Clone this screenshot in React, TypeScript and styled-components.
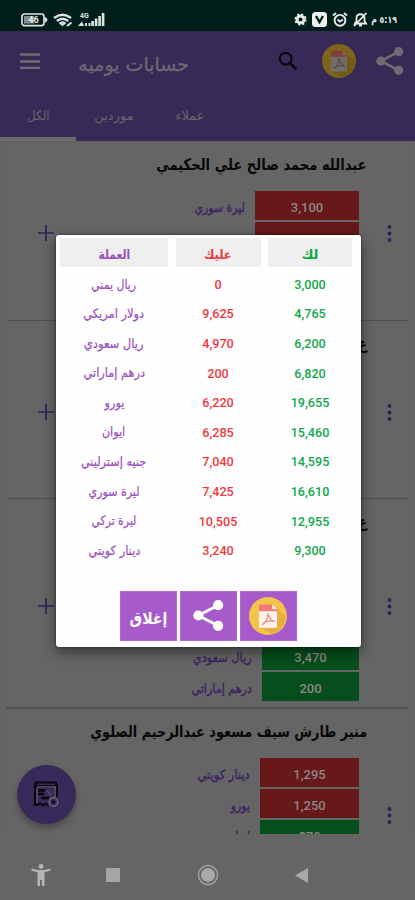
import React from "react";
import styled, { createGlobalStyle } from "styled-components";

const Global = createGlobalStyle`
  * { box-sizing: border-box; }
  body { margin: 0; background: #646464; font-family: Roboto, "DejaVu Sans", sans-serif; }
`;

const Phone = styled.div`
  position: relative;
  width: 415px;
  height: 900px;
  overflow: hidden;
  display: flex;
  flex-direction: column;
  background: #646464;
`;

/* Condensed Arabic lettering; $stroke thickens the regular weight a little */
const Arabic = styled.span<{ $size: number; $sx?: number; $origin?: string; $bold?: boolean; $stroke?: number }>`
  display: inline-block;
  direction: rtl;
  white-space: nowrap;
  font-family: "DejaVu Sans", sans-serif;
  font-size: ${(p) => p.$size}px;
  font-weight: ${(p) => (p.$bold ? 700 : 400)};
  line-height: 1.2;
  -webkit-text-stroke: ${(p) => p.$stroke ?? 0}px currentColor;
  transform: scaleX(${(p) => p.$sx ?? 1});
  transform-origin: ${(p) => p.$origin ?? "center"} center;
`;

const StatusBar = styled.div`
  flex: none;
  height: 31px;
  padding: 8px 18px 0 21px;
  display: flex;
  justify-content: space-between;
  align-items: center;
  background: #001f19;
  color: #e4e8e6;
`;
const StatusGroup = styled.div<{ $gap: number }>`
  display: flex;
  align-items: center;
  gap: ${(p) => p.$gap}px;
`;
const Clock = styled.span`
  font: 700 10px/14px "DejaVu Sans", sans-serif;
  direction: rtl;
  white-space: nowrap;
  transform: scaleX(0.78);
  transform-origin: right center;
  width: 24px;
  display: flex;
  justify-content: flex-start;
`;

const Header = styled.header`
  flex: none;
  height: 110px;
  display: flex;
  flex-direction: column;
  background: #372a56;
`;
const Toolbar = styled.div`
  height: 63px;
  display: flex;
  align-items: center;
  padding: 0 11px 3px 20px;
`;
const Title = styled.div`
  width: 112px;
  margin: 6px 0 0 37px;
  display: flex;
  justify-content: flex-end;
  color: #6c6a70;
`;
const Actions = styled.div`
  margin-left: auto;
  display: flex;
  align-items: center;
`;
const SearchSlot = styled.div`
  display: flex;
  margin-right: 24px;
`;
const ShareSlot = styled.div`
  display: flex;
  margin-left: 20px;
`;
const Tabs = styled.nav`
  flex: 1;
  display: flex;
`;
const Tab = styled.div<{ $active?: boolean }>`
  width: 76px;
  display: flex;
  justify-content: center;
  padding-top: 14px;
  color: #68656d;
  border-bottom: 4px solid ${(p) => (p.$active ? "#6b6b6b" : "transparent")};
`;

const List = styled.main`
  flex: none;
  height: 693px;
  overflow: hidden;
  padding: 2px 6px 0;
`;
const Card = styled.section<{ $h: number; $gap: number; $edge: number }>`
  height: ${(p) => p.$h}px;
  margin-bottom: ${(p) => p.$gap}px;
  display: grid;
  grid-template-columns: 48px 1fr 50px;
  border-bottom: ${(p) => p.$edge}px solid #505050;
  border-radius: 3px;
  background: #656565;
`;
const Side = styled.div<{ $top: number; $right?: boolean }>`
  padding-top: ${(p) => p.$top}px;
  display: flex;
  justify-content: ${(p) => (p.$right ? "flex-start" : "flex-end")};
  align-items: flex-start;
  padding-left: ${(p) => (p.$right ? 28 : 0)}px;
`;
const Body = styled.div`
  min-width: 0;
  display: flex;
  flex-direction: column;
  align-items: flex-end;
`;
const Name = styled.h2`
  margin: 0 -8px 0 0;
  height: 48px;
  padding-top: 12px;
  color: #090909;
  display: flex;
  justify-content: flex-end;
`;
const Entry = styled.div`
  display: flex;
  align-items: center;
  gap: 10px;
  height: 29px;
  margin-bottom: 2px;
  color: #3d2163;
`;
const EntryLabel = styled.div`
  display: flex;
  padding-top: 3px;
`;
const Amount = styled.div<{ $red?: boolean; $w: number }>`
  width: ${(p) => p.$w}px;
  height: 29px;
  display: flex;
  align-items: center;
  justify-content: center;
  padding-top: 3px;
  background: ${(p) => (p.$red ? "#671819" : "#064e1b")};
  color: #8d8787;
  font-size: 13px;
  font-weight: 500;
`;

const Fab = styled.div`
  position: absolute;
  left: 17px;
  top: 765px;
  width: 59px;
  height: 59px;
  border-radius: 50%;
  display: flex;
  align-items: center;
  justify-content: center;
  background: #372a5b;
  box-shadow: 0 4px 6px rgba(0, 0, 0, 0.3);
`;

const NavBar = styled.footer`
  flex: 1;
  display: flex;
  align-items: flex-start;
  padding: 26px 0 0 31px;
  background: #656565;
`;
const NavItem = styled.div<{ $w: number }>`
  width: ${(p) => p.$w}px;
  height: 30px;
  display: flex;
  align-items: center;
`;

const Dialog = styled.div`
  position: absolute;
  left: 55.5px;
  top: 235px;
  width: 305px;
  height: 412px;
  padding: 3px 8px 0 4.5px;
  display: flex;
  flex-direction: column;
  background: #fefefe;
  border-radius: 3px;
  box-shadow: 0 5px 14px rgba(0, 0, 0, 0.45), 0 0 3px rgba(0, 0, 0, 0.5);
`;
const TableRow = styled.div`
  display: grid;
  grid-template-columns: 108px 85px 84px;
  column-gap: 7.5px;
  height: 29.6px;
  align-items: center;
`;
const HeadRow = styled(TableRow)`
  height: 29px;
  margin-bottom: 2px;
`;
const tones = { purple: "#9a4fbd", red: "#ee383d", green: "#11a84c" };
const Cell = styled.div<{ $tone: keyof typeof tones; $head?: boolean }>`
  display: flex;
  align-items: center;
  justify-content: center;
  height: ${(p) => (p.$head ? 29 : 26)}px;
  padding-top: ${(p) => (p.$head ? 4 : 1)}px;
  background: ${(p) => (p.$head ? "#efefef" : "transparent")};
  color: ${(p) => tones[p.$tone]};
  font-size: 12.6px;
  font-weight: 500;
`;
const Buttons = styled.div`
  display: flex;
  gap: 3px;
  margin: 26px 0 0 59.5px;
`;
const DialogButton = styled.button`
  width: 57px;
  height: 50px;
  padding: 0;
  border: 1px solid #b06bd0;
  display: flex;
  align-items: center;
  justify-content: center;
  background: #a75bcb;
  color: #fff;
`;
const CloseLabel = styled.div`
  padding-top: 5px;
  display: flex;
`;

const Share = ({ size, color }: { size: number; color: string }) => (
  <svg width={size} height={size} viewBox="0 0 30 30" fill={color}>
    <path d="M24.300 5 5.200 15l19.100 10" fill="none" stroke={color} strokeWidth="2.800" />
    <circle cx="24.300" cy="5" r="4.900" />
    <circle cx="5.200" cy="15" r="4.900" />
    <circle cx="24.300" cy="25" r="4.900" />
  </svg>
);

const Pdf = ({ size, dim }: { size: number; dim?: boolean }) => {
  const c = dim
    ? { disc: "#7d651c", shade: "#6c5614", page: "#716c66", red: "#814039", line: "#55504b" }
    : { disc: "#f4c34c", shade: "#dfa63b", page: "#fbf3ec", red: "#f27a76", line: "#f2908c" };
  return (
    <svg width={size} height={size} viewBox="0 0 40 40">
      <circle cx="20" cy="20" r="20" fill={c.disc} />
      <path d="m29 12 9.500 8A20 20 0 0 1 25 39l-14-7z" fill={c.shade} opacity="0.7" />
      <path d="M10.500 13h19v19.500h-19z" fill={c.page} />
      <path d="M10.500 8h14l5 5v2h-19z" fill={c.red} />
      <path d="m24.500 8 5 5h-5z" fill={c.page} />
      <path d="M14 29c3-1 6-6 6-12 1 5 3 8 7 9M14 29c3-4 8-4 13-3" fill="none" stroke={c.line} strokeWidth="1.400" />
    </svg>
  );
};

const Dots = () => (
  <svg width="5" height="17" viewBox="0 0 5 17" fill="#2d2357">
    <circle cx="2.500" cy="2" r="1.900" />
    <circle cx="2.500" cy="8.500" r="1.900" />
    <circle cx="2.500" cy="15" r="1.900" />
  </svg>
);
const Plus = () => (
  <svg width="16" height="16" viewBox="0 0 16 16" stroke="#2d2357" strokeWidth="1.700">
    <path d="M8 0v16M0 8h16" />
  </svg>
);

type Item = { label?: string; value?: string; red?: boolean; sx?: number };
type Account = { id: number; name: string; sx: number; h: number; gap: number; edge: number; side: number; w: number; plus: boolean; items: Item[] };

const accounts: Account[] = [
  {
    id: 1, name: "عبدالله محمد صالح علي الحكيمي", sx: 0.82, h: 178, gap: 1, edge: 1, side: 83, w: 104, plus: true,
    items: [{ label: "ليرة سوري", value: "3,100", red: true, sx: 0.87 }, { red: true }],
  },
  { id: 2, name: "ع", sx: 0.82, h: 177, gap: 1, edge: 1, side: 83, w: 104, plus: true, items: [] },
  {
    id: 3, name: "ع", sx: 0.82, h: 209, gap: 1, edge: 2, side: 99, w: 97, plus: true,
    items: [
      {},
      {},
      {},
      { label: "ريال سعودي", value: "3,470", sx: 0.91 },
      { label: "درهم إماراتي", value: "200", sx: 0.89 },
    ],
  },
  {
    id: 4, name: "منير طارش سيف مسعود عبدالرحيم الصلوي", sx: 0.802, h: 209, gap: 0, edge: 1, side: 98, w: 99, plus: false,
    items: [
      { label: "دينار كويتي", value: "1,295", red: true, sx: 0.92 },
      { label: "يورو", value: "1,250", red: true, sx: 0.87 },
      { label: "ايوان", value: "870", sx: 0.87 },
    ],
  },
];

const totals: [string, string, string, number][] = [
  ["ريال يمني", "0", "3,000", 0.84],
  ["دولار امريكي", "9,625", "4,765", 0.88],
  ["ريال سعودي", "4,970", "6,200", 0.89],
  ["درهم إماراتي", "200", "6,820", 0.87],
  ["يورو", "6,220", "19,655", 0.86],
  ["ايوان", "6,285", "15,460", 0.86],
  ["جنيه إسترليني", "7,040", "14,595", 0.87],
  ["ليرة سوري", "7,425", "16,610", 0.85],
  ["ليرة تركي", "10,505", "12,955", 0.83],
  ["دينار كويتي", "3,240", "9,300", 0.88],
];

export default function App() {
  return (
    <Phone>
      <Global />
      <StatusBar>
        <StatusGroup $gap={5}>
          <svg width="27" height="14" viewBox="0 0 27 14">
            <rect x="1" y="1" width="22" height="11.600" rx="2.500" fill="none" stroke="#dfe4e2" strokeWidth="1.700" />
            <rect x="3" y="3" width="10" height="7.600" fill="#7f8d8a" />
            <path d="M24 4.500h1.300l1.200 2.300-1.200 2.400H24z" fill="#dfe4e2" />
            <text x="12.500" y="10" fontSize="9" fontWeight="700" textAnchor="middle" fill="#e8ecea" fontFamily="Roboto">46</text>
          </svg>
          <svg width="20" height="14" viewBox="0 0 20 14" fill="none" stroke="#dfe4e2" strokeWidth="2.300">
            <path d="M1 5q8.500-6.500 17 0M3.800 8q5.700-4.500 11.400 0M6.500 10.800q3-2.500 6 0" />
            <path d="m9.500 13.500-2-2.500h4z" fill="#dfe4e2" stroke="none" />
            <path d="m14 13 4.500-3.500" strokeWidth="2" />
          </svg>
          <svg width="27" height="15" viewBox="0 0 27 15" fill="#dfe4e2">
            <text x="2" y="6" fontSize="7" fontWeight="700" fontFamily="Roboto">4G</text>
            <path d="M0 14l4-4.500L6 14zM7 11h2v3H7zM10.500 11h2v3h-2zM13.300 9h2.600v5h-2.600zM16.800 6.500h2.600V14h-2.600zM20.300 4h2.600v10h-2.600zM23.800 1h2.600v13h-2.600z" />
          </svg>
        </StatusGroup>
        <StatusGroup $gap={5}>
          <svg width="13" height="13" viewBox="0 0 13 13">
            <circle cx="6.500" cy="6.500" r="3.500" fill="none" stroke="#e8ecea" strokeWidth="3" />
            <circle cx="6.500" cy="6.500" r="5.300" fill="none" stroke="#e8ecea" strokeWidth="1.600" strokeDasharray="2.100 2.060" />
          </svg>
          <svg width="15" height="15" viewBox="0 0 15 15">
            <rect width="15" height="15" rx="3.500" fill="#eef1ef" />
            <path d="m4 4 3.500 6L11 4" fill="none" stroke="#00201a" strokeWidth="2.400" />
          </svg>
          <svg width="16" height="15" viewBox="0 0 16 15" fill="none" stroke="#e8ecea" strokeWidth="1.900">
            <circle cx="8" cy="8.300" r="5.400" />
            <path d="m1 3.500 3-2.500M15 3.500 12 1M5.500 7.500 8 9.500l3-2" />
          </svg>
          <svg width="15" height="15" viewBox="0 0 15 15" fill="none" stroke="#e8ecea" strokeWidth="1.800">
            <path d="M2 11.500h11L11.500 9V6c0-5-8-5-8 0v3zM6 13.500h3M1 14 13.500 1" />
          </svg>
          <Clock>٥:١٩ م</Clock>
        </StatusGroup>
      </StatusBar>

      <Header>
        <Toolbar>
          <svg width="20" height="16" viewBox="0 0 20 16" stroke="#6f6c74" strokeWidth="2.600">
            <path d="M0 1.500h20M0 8.500h20M0 15h20" />
          </svg>
          <Title><Arabic $size={19} $origin="right" $stroke={0.3}>حسابات يوميه</Arabic></Title>
          <Actions>
            <SearchSlot>
              <svg width="20" height="20" viewBox="0 0 20 20" fill="none" stroke="#0b080f" strokeWidth="2.200">
                <circle cx="7.700" cy="7.700" r="5.900" />
                <path d="m12 12 6.500 6.500" strokeWidth="2.800" />
              </svg>
            </SearchSlot>
            <Pdf size={34} dim />
            <ShareSlot><Share size={28} color="#6f6d74" /></ShareSlot>
          </Actions>
        </Toolbar>
        <Tabs>
          <Tab $active><Arabic $size={13} $sx={0.92}>الكل</Arabic></Tab>
          <Tab><Arabic $size={13}>موردين</Arabic></Tab>
          <Tab><Arabic $size={13}>عملاء</Arabic></Tab>
        </Tabs>
      </Header>

      <List>
        {accounts.map((a) => (
          <Card key={a.id} $h={a.h} $gap={a.gap} $edge={a.edge}>
            <Side $top={a.side - 1}>{a.plus && <Plus />}</Side>
            <Body>
              <Name><Arabic $size={16} $bold $sx={a.sx} $origin="right">{a.name}</Arabic></Name>
              {a.items.map((it, i) => (
                <Entry key={i}>
                  {it.label && (
                    <EntryLabel>
                      <Arabic $size={12.5} $stroke={0.35} $sx={it.sx} $origin="right">{it.label}</Arabic>
                    </EntryLabel>
                  )}
                  <Amount $red={it.red} $w={a.w}>{it.value}</Amount>
                </Entry>
              ))}
            </Body>
            <Side $top={a.side - 1} $right><Dots /></Side>
          </Card>
        ))}
      </List>

      <NavBar>
        <NavItem $w={75}>
          <svg width="20" height="23" viewBox="0 0 20 23" fill="#b5b5b5">
            <circle cx="10" cy="2.500" r="2.400" />
            <path d="M.5 4.500 7 6h6l6.500-1.500v2L13.500 8.500V22h-2.600v-6H9v6H6.500V8.500L.5 6.500z" />
          </svg>
        </NavItem>
        <NavItem $w={91}>
          <svg width="14" height="14"><rect width="14" height="14" rx="1" fill="#a5a5a5" /></svg>
        </NavItem>
        <NavItem $w={98}>
          <svg width="22" height="22" viewBox="0 0 22 22">
            <circle cx="11" cy="11" r="9.500" fill="none" stroke="#a2a2a2" strokeWidth="1.500" />
            <circle cx="11" cy="11" r="7" fill="#a8a8a8" />
          </svg>
        </NavItem>
        <NavItem $w={20}>
          <svg width="13" height="15" viewBox="0 0 13 15"><path d="M13 0v15L0 7.500z" fill="#a8a8a8" /></svg>
        </NavItem>
      </NavBar>

      <Fab>
        <svg width="27" height="27" viewBox="0 0 27 27" fill="none" stroke="#09070d" strokeWidth="2">
          <path d="M3 1.500h20v3.500H3z" />
          <path d="M2 2v22h3l2-2 3 2.500 3-2 2 2M24 3v13" />
          <path d="M5 9.500h7M5 13h6M8 17h8" strokeWidth="2.600" />
          <path d="M4 5.800h19M22 6v10M4 7v15M14 9.500l4 5" stroke="#65616a" strokeWidth="1.100" />
          <circle cx="20.500" cy="21" r="4.200" stroke="#6b6770" strokeWidth="1.600" />
          <circle cx="20.500" cy="21" r="1.600" fill="#09070d" stroke="none" />
        </svg>
      </Fab>

      <Dialog>
        <HeadRow>
          <Cell $tone="purple" $head><Arabic $size={13} $bold $sx={0.82}>العملة</Arabic></Cell>
          <Cell $tone="red" $head><Arabic $size={13} $bold $sx={0.87}>عليك</Arabic></Cell>
          <Cell $tone="green" $head><Arabic $size={13} $bold>لك</Arabic></Cell>
        </HeadRow>
        {totals.map(([label, debit, credit, sx]) => (
          <TableRow key={label}>
            <Cell $tone="purple"><Arabic $size={13} $sx={sx} $stroke={0.2}>{label}</Arabic></Cell>
            <Cell $tone="red">{debit}</Cell>
            <Cell $tone="green">{credit}</Cell>
          </TableRow>
        ))}
        <Buttons>
          <DialogButton><CloseLabel><Arabic $size={16} $bold $sx={0.88}>إغلاق</Arabic></CloseLabel></DialogButton>
          <DialogButton><Share size={31} color="#fff" /></DialogButton>
          <DialogButton><Pdf size={38} /></DialogButton>
        </Buttons>
      </Dialog>
    </Phone>
  );
}
